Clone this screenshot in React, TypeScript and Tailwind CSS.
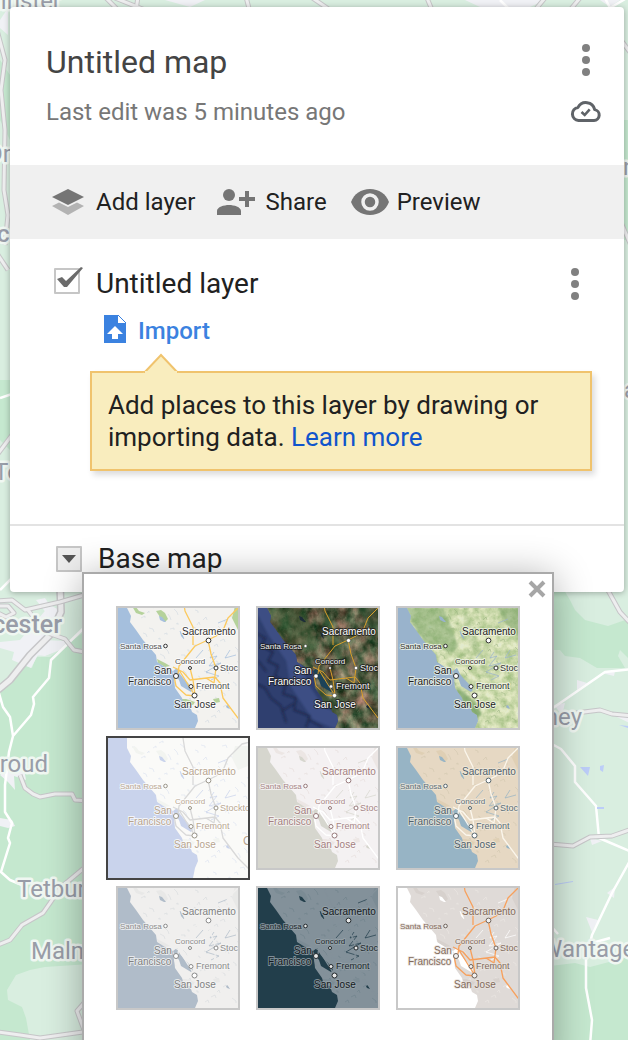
import React, { useState } from "react";

type Theme = {
  id: string;
  name: string;
  water: string;
  land: string;
  park: string;
  road: string;
  label: string;
  minor: string;
  halo: string;
  ring: string;
  dot: string;
  speck: string;
  texture?: "satellite" | "terrain";
};

const themes: Theme[] = [
  { id: "map", name: "Map", water: "#a5bfdd", land: "#f3f2ef", park: "#b5d29b", road: "#fcc95c", label: "#303030", minor: "#505050", halo: "#ffffff", ring: "#333333", dot: "#ffffff", speck: "#c9d5de" },
  { id: "satellite", name: "Satellite", water: "#2f3f6f", land: "#555a45", park: "#3c5a3a", road: "#d9a02c", label: "#ffffff", minor: "#f4f4f4", halo: "#1c1c1c", ring: "#222222", dot: "#ffffff", speck: "#8c8168", texture: "satellite" },
  { id: "terrain", name: "Terrain", water: "#99b3cc", land: "#cfdcae", park: "#8fb27c", road: "#e4e6c2", label: "#202020", minor: "#303030", halo: "#f4f8ea", ring: "#333333", dot: "#ffffff", speck: "#94b07c", texture: "terrain" },
  { id: "light", name: "Light Political", water: "#c9d3ec", land: "#fafaf8", park: "#f2f4f0", road: "#d9d9d9", label: "#b7a48e", minor: "#b9a893", halo: "#ffffff", ring: "#999488", dot: "#ffffff", speck: "#d5dcee" },
  { id: "mono", name: "Mono City", water: "#d6d6ce", land: "#f4f1f2", park: "#ece6e4", road: "#ffffff", label: "#a37f80", minor: "#a58586", halo: "#fbf8f8", ring: "#96797a", dot: "#ffffff", speck: "#e2d9d6" },
  { id: "atlas", name: "Simple Atlas", water: "#97b4c5", land: "#e6d8c3", park: "#dfcfb4", road: "#fbf6ec", label: "#4f616c", minor: "#5c6e79", halo: "#f2eadc", ring: "#56666e", dot: "#ffffff", speck: "#cfc4ac" },
  { id: "landmass", name: "Light Landmass", water: "#b0bcc9", land: "#f0efee", park: "#e8e8e7", road: "#f0efee", label: "#808080", minor: "#8c8c8c", halo: "#f6f6f6", ring: "#8a8a8a", dot: "#ffffff", speck: "#d2d6db" },
  { id: "dark", name: "Dark Landmass", water: "#223e4b", land: "#83919a", park: "#7b8b94", road: "#83919a", label: "#14191c", minor: "#20282c", halo: "#98a4ab", ring: "#22282b", dot: "#e8e8e8", speck: "#6b7e89" },
  { id: "whitewater", name: "Whitewater", water: "#ffffff", land: "#dfdad7", park: "#d7d1cd", road: "#f7a05c", label: "#836b5b", minor: "#836b5b", halo: "#e9e4e0", ring: "#6e625a", dot: "#f2f2f2", speck: "#eeeae7" },
];

const SEA = "M-10-10H9L9 0 13 8 12 14 18 22 25 32 32 40 38 47 39 54 47 59 55 63 56 70 57 80 64 90 66 97 72 98 74 104 79 107 80 113 77 120 75 130H-10Z";
const BAY = "M55 63 59 60 62 66 66 71 70 75 75 82 73 84 68 81 63 78 61 72 57 67Z";
const PARKS = ["M14-2 18-1 21 3 27 5 24 7 18 5Z", "M38 3 43 2 47 5 50 11 47 14 42 9Z", "M114 10 117-2H130V18L120 22Z", "M39 51 47 55 52 58 47 59 40 55Z", "M60 91 68 91 77 94 75 97 66 97Z", "M95 91 101 90 102 94 97 95Z"];
const ROADS = "M65-10 67 3 75 19V37M60 66 61 58 77 38 90 32 98 28 106 20 110 10 120 0 124-4 140-8M90 32 93 46 98 60 96 75 88 70M55 59 65 64 72 72 97 69 102 75 105 90 120 110 134 124M72 60 75 72 77 87M56 68 58 78 68 87 77 88M61 62 69 75 76 86";
const DELTA = "M96 44 92 50 99 48 91 58 103 55 88 64 101 68 93 72M112 42 107 50 118 47M62 23 64 28 66 31M100 15 110 11M85 42 78 50";
const RIDGES = Array.from({ length: 110 }, (_, i) => {
  const x = (i * 47) % 131;
  const y = ((i * 83) % 137) - 6;
  const a = ((i * 13) % 7) - 3;
  return `M${x} ${y}l${2 + (i % 3)} ${a}l${i % 2} ${2 + (i % 2)}`;
}).join("");

const cities: [number, number, number][] = [
  [90.5, 32.5, 2.4], [47.5, 38, 1.8], [72, 60, 1.5], [58, 68, 2.5], [73, 78.5, 2], [76.5, 87.5, 2.5], [98, 60, 2],
];

function MapPreview({ theme, selected }: { theme: Theme; selected: boolean }) {
  const sat = theme.texture === "satellite";
  const id = theme.id;
  return (
    <svg viewBox={selected ? "-10 -10 140 140" : "0 0 120 120"} className="block h-full w-full" aria-hidden="true">
      <defs>
        <filter id={`grain-${id}`} x="0" y="0" width="1" height="1" colorInterpolationFilters="sRGB">
          <feTurbulence type="fractalNoise" baseFrequency={sat ? "0.09 0.07" : "0.12"} numOctaves="5" seed="8" />
          {sat ? (
            <feColorMatrix values=".9 0 0 0 -.07  .6 .3 0 0 -.06  .6 .2 0 0 -.11  0 0 0 0 1" />
          ) : (
            <feColorMatrix values="1.1 0 0 0 .24  .7 0 0 0 .5  1.1 0 0 0 .12  0 0 0 0 1" />
          )}
        </filter>
        <filter id={`soft-${id}`}>
          <feGaussianBlur stdDeviation="1.2" />
        </filter>
        <clipPath id={`sea-${id}`}>
          <path d={SEA} />
        </clipPath>
      </defs>
      <rect x="-10" y="-10" width="150" height="150" fill={theme.land} />
      {theme.texture && <rect x="-10" y="-10" width="150" height="150" filter={`url(#grain-${id})`} opacity={sat ? 0.95 : 0.4} />}
      {theme.texture && (
        <g fill={sat ? "#264a28" : "#6f9c60"} filter={`url(#soft-${id})`}>
          <path d="M9 0H45L52 15 60 38 55 45 40 40 25 32 13 14Z" opacity=".45" />
          <path d="M100 0H130V35L112 22Z" opacity=".5" />
          <path d="M57 80 66 84 78 96 84 106 79 110 66 97Z" opacity=".7" />
          <path d="M66 0 76 22 84 48 94 72 86 66 76 45 65 25Z" opacity={sat ? 0.5 : 0.12} />
        </g>
      )}
      <path d={RIDGES} fill="none" stroke={theme.speck} strokeWidth=".7" opacity={sat ? 0.25 : 0.7} />
      {!theme.texture && PARKS.map((d) => <path key={d} d={d} fill={theme.park} />)}
      {!sat && <path d={DELTA} fill="none" stroke={theme.water} strokeWidth=".9" opacity=".8" />}
      <path d="M41 8 44 9 48 14 46 14 42 12ZM62 23 65 27 66 31 63 28ZM108 98 110 97 112 101 109 100Z" fill={sat ? "#1d2c38" : theme.water} />
      <path d={SEA} fill={theme.water} />
      {sat && (
        <g clipPath={`url(#sea-${id})`}>
          <g fill="none" strokeLinecap="round" strokeLinejoin="round" filter={`url(#soft-${id})`}>
            <path d="M5 0 18 24 36 50 40 75 60 105 76 112" stroke="#42558d" strokeWidth="16" opacity=".7" />
            <path d="M-2 25 7 30 4 38 15 44 10 53 20 58 17 68 28 75 25 86 38 90 36 102 52 108 48 119M-3 75 7 80 13 90 23 98 28 114M0 53 8 63M35 96 24 103M50 111 64 119" stroke="#141f3c" strokeWidth="2" opacity=".6" />
          </g>
        </g>
      )}
      <path d={BAY} fill={sat ? "#1d4258" : theme.water} />
      {theme.texture !== "terrain" && <path d={ROADS} fill="none" stroke={theme.road} strokeWidth={sat ? 1 : 1.3} strokeLinejoin="round" />}
      <g fontFamily="'Liberation Sans', Arial, sans-serif" fill={theme.label} stroke={theme.halo} strokeWidth="1.8" strokeLinejoin="round" paintOrder="stroke" strokeOpacity=".8">
        <g fontSize="10">
          <text x="64" y="27">Sacramento</text>
          <text x="36" y="66">San</text>
          <text x="10" y="77">Francisco</text>
          <text x="56" y="100">San Jose</text>
          {selected && <text x="125" y="97" fontSize="12">Oakdale</text>}
        </g>
        <g fontSize="8" fill={theme.minor}>
          <text x="2" y="41">Santa Rosa</text>
          <text x="57" y="56">Concord</text>
          <text x="78" y="81" fontSize="9">Fremont</text>
          <text x="102" y="63" fontSize="9">Stockton</text>
        </g>
      </g>
      {cities.map(([x, y, r]) => (
        <circle key={`${x}-${y}`} cx={x} cy={y} r={sat ? r * 0.85 : r} fill={theme.dot} stroke={theme.ring} strokeWidth={sat ? 0.4 : 1} />
      ))}
    </svg>
  );
}

function MapBackdrop() {
  const majors = [
    "M60 585 61 612 50 635 30 655 10 680-2 690",
    "M84 595 60 602 25 610 12 600-2 601M-2 606 8 606 14 613 6 617-2 613M28 610 45 632 65 639 74 650 90 653",
    "M20 775 25 788 33 794 40 797 55 794 72 794 75 800 90 801",
    "M90 863 60 888 50 903 43 913 22 925 10 940-2 945",
    "M-2 1032 20 1035 40 1038 90 1031M84 1003 77 1011 84 1030",
    "M605 585 620 612 634 627",
    "M576 713 600 710 612 714 632 716",
    "M550 844 573 846 590 837 612 836 632 829",
    "M-3 30 5 60 1 90 5 130 4 190 8 215 5 245M104-4 120 12M115-2 150 12M246-3 250 12M311-3 330 10M138-3 136 10M427-2 432 10M545-2 535 10M580-2 570 10M618 36 632 55M620 220 632 248M-2 255 8 270M-3 455 12 435",
  ];
  return (
    <svg viewBox="0 0 628 1040" preserveAspectRatio="xMidYMin slice" className="absolute inset-0 h-full w-full" aria-hidden="true">
      <rect width="628" height="1040" fill="#d9eee0" />
      <g fill="#c5e8cf">
        <path d="M-2 690 20 664 32 668 36 657 50 657 84 632V1040H-2Z" />
        <path d="M550 590H564L570 600 575 610 585 620 608 626 628 619V658L620 650 618 656 625 668H597L580 658 565 656 560 650H550Z" />
        <path d="M550 966 575 963 590 967 628 957V1040H550Z" />
        <path d="M0 60 10 75V140L0 120ZM0 380H10V450L0 440ZM622 120H628V240H622Z" />
      </g>
      <path d="M16 975 30 970 45 967 90 964V1040H30L26 1018 22 1007 8 1000 7 990Z" fill="#d9eee0" />
      <g fill="#f0f1f5">
        <path d="M0 642 20 640 50 605 63 612 50 638 38 655 31 668 12 660 14 652 0 648ZM35 655 42 640 68 641 60 650 45 656ZM36 600 45 598 53 610 47 614ZM0 775 22 757 26 780 14 776 15 790 8 782ZM0 818 12 820 15 826 8 828 0 826Z" />
        <path d="M577 680 587 683 577 690ZM602 673 615 671 614 676ZM554 705 565 703 562 715ZM617 717 632 713V724ZM586 917 598 920 592 932ZM607 893 615 887 614 898ZM590 838 602 841 592 845ZM165 0H205L190 7ZM465 0H545L530 7H480ZM600 0H620L610 7ZM0 20 8 8 8 35 0 28Z" />
      </g>
      <g fill="none" stroke="#fff" strokeWidth="2.5" strokeLinejoin="round">
        <path d="M90 622 51 660 49 678 33 697 34 704 31 715 13 736 9 752 5 785V812L12 823 8 838 10 843 1 872 10 880 22 885M-2 690 3 707 10 717 13 736" />
        <path d="M550 710 605 672 632 669M550 743 561 749 575 766V782L596 806 599 838 632 852M632 857 612 893 592 935 586 960V988L592 1020 590 1045M550 925 558 934M592 943 610 938" />
        <path d="M500 0 508 8M605-2 610 8 630-4M0 398 12 394M0 590 12 578M0 235 10 232" />
      </g>
      <g fill="none" strokeLinejoin="round">
        {majors.map((d, i) => (
          <g key={d}>
            <path d={d} stroke="#c6c6c8" strokeWidth={i === 0 ? 8 : 5} />
            <path d={d} stroke="#eeeeef" strokeWidth={i === 0 ? 5 : 3} />
          </g>
        ))}
      </g>
      <path d="M580 767 590 767 588 776ZM600 766 604 765 603 772 600 770ZM597 807 604 807V809H597ZM555 884 573 881V882L555 885ZM619 725 628 726V728Z" fill="#bccdf8" />
      <g fontFamily="Roboto, sans-serif" fontSize="24" fill="#999da8" stroke="#f0f7f2" strokeWidth="5" strokeLinejoin="round" paintOrder="stroke">
        <text x="61" y="9" textAnchor="end">Leominster</text>
        <text x="11" y="162" textAnchor="end">Dr</text>
        <text x="-3" y="242" fontWeight="500">c</text>
        <text x="-6" y="480">To</text>
        <text x="623" y="175">n</text>
        <text x="624" y="398">a</text>
        <text x="62" y="633" textAnchor="end" fontSize="25" fontWeight="500">Gloucester</text>
        <text x="48" y="772" textAnchor="end">Stroud</text>
        <text x="17" y="897">Tetbury</text>
        <text x="31" y="959">Malm</text>
        <text x="582" y="725" textAnchor="end">Witney</text>
        <text x="541" y="957">Wantage</text>
      </g>
    </svg>
  );
}

function MoreIcon() {
  return (
    <svg viewBox="0 0 8 32" className="h-8 w-2" fill="#808080" aria-hidden="true">
      <circle cx="4" cy="4" r="4" />
      <circle cx="4" cy="16" r="4" />
      <circle cx="4" cy="28" r="4" />
    </svg>
  );
}

export default function App() {
  const [base, setBase] = useState("light");
  const [open, setOpen] = useState(true);
  const [visible, setVisible] = useState(true);

  return (
    <main className="relative h-screen overflow-hidden font-[Roboto,sans-serif] text-[#212121]">
      <MapBackdrop />
      <section className="relative mt-[7px] mr-1 ml-[10px] rounded bg-white shadow-[0_1px_6px_rgba(0,0,0,0.3)]">
        <header className="flex justify-between pt-[35px] pr-[22px] pb-[37px] pl-9">
          <div className="flex flex-col gap-[14px]">
            <h1 className="text-[32px] leading-10 text-[#444]">Untitled map</h1>
            <p className="text-2xl leading-8 text-[#777]">Last edit was 5 minutes ago</p>
          </div>
          <div className="flex flex-col items-center gap-[18px] pt-[2px]">
            <button type="button" aria-label="Map options">
              <MoreIcon />
            </button>
            <svg viewBox="0 0 32 32" className="size-8" fill="none" stroke="#5f6368" strokeWidth="3" role="img" aria-label="All changes saved">
              <path d="M8.5 26.500H24a5.500 5.500 0 0 0 .7-10.900A9 9 0 0 0 8 13.400a6.600 6.600 0 0 0 .5 13.100Z" strokeLinejoin="round" />
              <path d="m11.500 18 3.200 3 5-5.600" strokeWidth="2.600" />
            </svg>
          </div>
        </header>

        <nav className="flex h-[74px] items-center bg-[#f0f0f0] pl-[42px] text-2xl leading-8">
          <button type="button" className="flex items-center gap-3">
            <svg viewBox="0 0 32 26" className="h-[26px] w-8" aria-hidden="true">
              <path d="M16 0 32 8 16 16 0 8Z" fill="#757575" />
              <path d="M7 13.500 16 18 25 13.500 32 17 16 26 0 17Z" fill="#b3b3b3" />
            </svg>
            Add layer
          </button>
          <button type="button" className="ml-[22px] flex items-center gap-[10px]">
            <svg viewBox="0 0 38 26" className="h-[26px] w-[38px]" fill="#757575" aria-hidden="true">
              <circle cx="12" cy="6" r="6" />
              <path d="M0 26V22C0 18 7 16 12 16S24 18 24 22V26ZM28 2H32V8H38V12H32V18H28V12H22V8H28Z" />
            </svg>
            Share
          </button>
          <button type="button" className="ml-6 flex items-center gap-2">
            <svg viewBox="0 0 38 26" className="h-[26px] w-[38px]" aria-hidden="true">
              <path d="M19 0C10 0 3 5 0 13 3 21 10 26 19 26S35 21 38 13C35 5 28 0 19 0Z" fill="#757575" />
              <circle cx="19" cy="13" r="7" fill="none" stroke="#f0f0f0" strokeWidth="3.500" />
            </svg>
            Preview
          </button>
        </nav>

        <div className="pt-[27px] pr-8 pb-[53px] pl-11">
          <div className="flex items-center">
            <label className="flex grow items-center gap-4 text-[28px] leading-9">
              <span className="relative -mt-[6px] size-[26px]">
                <input
                  type="checkbox"
                  checked={visible}
                  onChange={(e) => setVisible(e.target.checked)}
                  className="block size-[26px] appearance-none rounded-[1px] border-2 border-[#c6c6c6] bg-white"
                />
                {visible && (
                  <svg viewBox="0 0 30 28" className="pointer-events-none absolute -top-[1px] left-0 h-7 w-[30px]" aria-hidden="true">
                    <path d="M3 12 8 10 12 14 27 0 29 1 13 20 10 20Z" fill="#6b6b6b" />
                  </svg>
                )}
              </span>
              Untitled layer
            </label>
            <button type="button" aria-label="Layer options" className="mr-[13px]">
              <MoreIcon />
            </button>
          </div>
          <button type="button" className="mt-[13px] ml-[50px] flex items-center gap-3 text-2xl leading-8 font-medium text-[#3b82e0]">
            <svg viewBox="0 0 22 28" className="-mt-1 h-7 w-[22px]" aria-hidden="true">
              <path d="M0 0H14V8H22V28H0Z" fill="#3b82e0" />
              <path d="M14 0 22 8" stroke="#3b82e0" strokeWidth="1" />
              <path d="M11 11 19 19H14V24H8V19H3Z" fill="#fff" />
            </svg>
            Import
          </button>
          <aside className="relative mt-6 ml-9 border-2 border-[#f0c36d] bg-[#f9edbe] p-4 text-[26px] leading-8 shadow-[3px_4px_6px_rgba(0,0,0,0.14)]">
            <svg viewBox="0 0 36 20" className="absolute -top-5 left-[51px] h-5 w-9" aria-hidden="true">
              <path d="M0 20 2 19 18 2 34 19 36 20Z" fill="#f9edbe" />
              <path d="M1 20 18 2 35 20" fill="none" stroke="#f0c36d" strokeWidth="2" />
              <path d="M3 20 5 18H31L33 20Z" fill="#f9edbe" />
            </svg>
            <span className="absolute -top-[2px] left-[53px] h-[2px] w-8 bg-[#f9edbe]" />
            Add places to this layer by drawing or importing data.{" "}
            <a href="#learn-more" className="text-[#1155cc]">Learn more</a>
          </aside>
        </div>

        <div className="relative flex items-center gap-4 border-t-2 border-[#e3e3e3] py-[15px] pl-[46px]">
          <button
            type="button"
            aria-label="Choose base map"
            aria-expanded={open}
            onClick={() => setOpen(!open)}
            className="flex size-[26px] items-center justify-center rounded-[1px] border-2 border-[#c6c6c6] bg-[#eee]"
          >
            <svg viewBox="0 0 14 8" className="h-2 w-[14px]" fill="#555" aria-hidden="true">
              <path d="M0 0H14L7 8Z" />
            </svg>
          </button>
          <h2 className="text-[28px] leading-9">Base map</h2>

          {open && (
            <div role="dialog" aria-label="Base map styles" className="absolute top-[46px] left-[72px] border-2 border-[#aaa] bg-white px-6 pt-6 pb-12 shadow-[0_4px_36px_rgba(0,0,0,0.32)]">
              <button type="button" aria-label="Close" onClick={() => setOpen(false)} className="absolute top-[6px] right-[6px]">
                <svg viewBox="0 0 18 18" className="size-[18px]" fill="none" stroke="#a6a6a6" strokeWidth="4" aria-hidden="true">
                  <path d="m2 2 14 14M16 2 2 16" />
                </svg>
              </button>
              <div className="grid grid-cols-[repeat(3,140px)]">
                {themes.map((theme) => {
                  const selected = theme.id === base;
                  return (
                    <button
                      key={theme.id}
                      type="button"
                      aria-label={theme.name}
                      aria-pressed={selected}
                      onClick={() => setBase(theme.id)}
                      className={selected ? "-m-[2px] size-36 border-2 border-[#444]" : "m-2 size-[124px] border-2 border-[#c8c8c8]"}
                    >
                      <MapPreview theme={theme} selected={selected} />
                    </button>
                  );
                })}
              </div>
            </div>
          )}
        </div>
      </section>
    </main>
  );
}
